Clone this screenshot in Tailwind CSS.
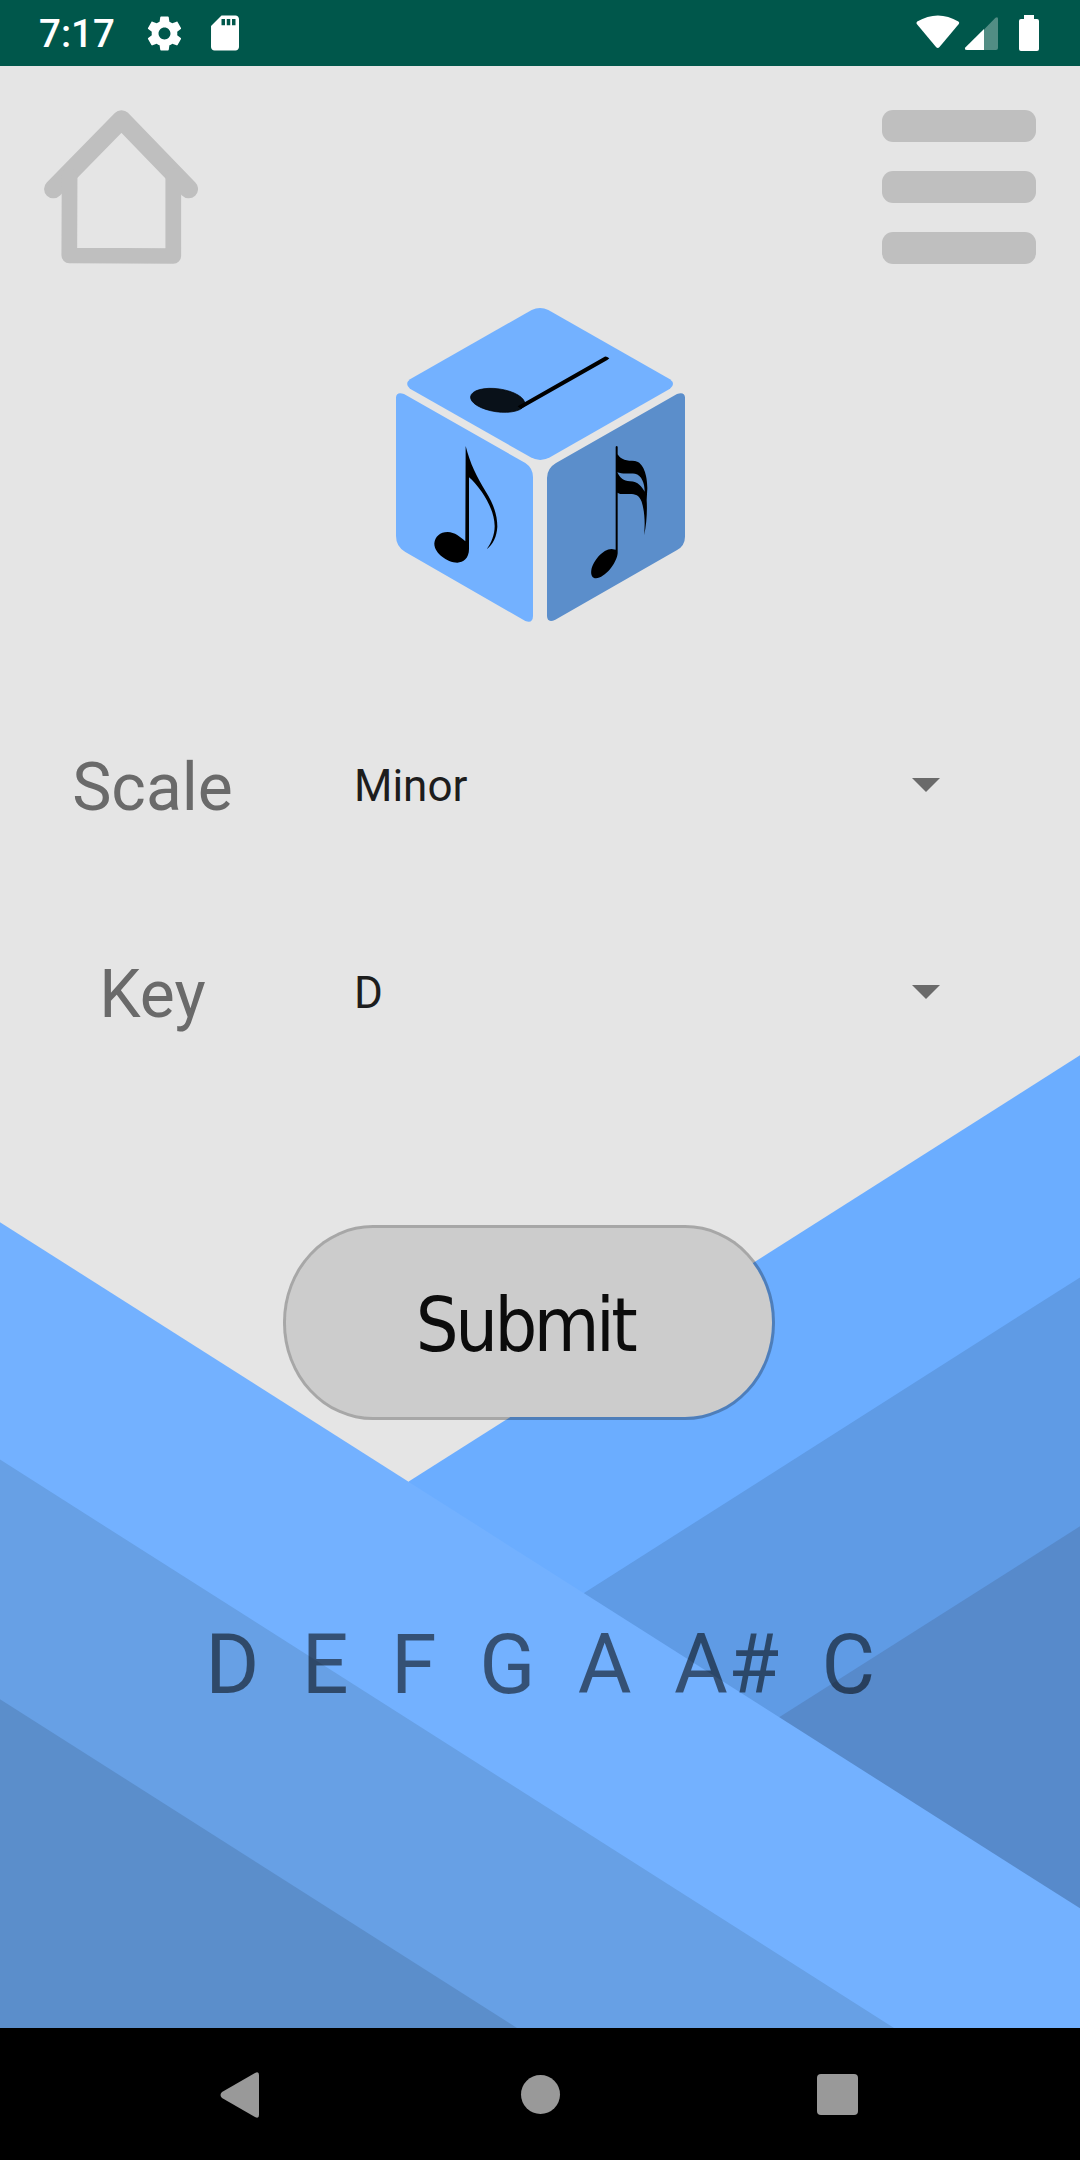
<!DOCTYPE html>
<html lang="en">
<head>
<meta charset="utf-8">
<title>Scales</title>
<script src="https://cdn.jsdelivr.net/npm/@tailwindcss/browser@4"></script>
</head>
<body class="w-[1080px] h-[2160px] flex flex-col overflow-hidden bg-[#e5e5e5] font-['Roboto',sans-serif]">

<!-- Status bar -->
<header class="h-[66px] shrink-0 bg-[#00574b] text-white flex items-center justify-between pl-[39px] pr-[41px]">
  <div class="flex items-center">
    <span class="w-[105px] pt-[3px] text-[38.5px] leading-none font-medium">7:17</span>
    <svg class="size-[41px]" viewBox="0 0 24 24" fill="currentColor"><path d="M19.43 12.98c.04-.32.07-.64.07-.98s-.03-.66-.07-.98l2.11-1.65c.19-.15.24-.42.12-.64l-2-3.46c-.12-.22-.39-.3-.61-.22l-2.49 1c-.52-.4-1.08-.73-1.69-.98l-.38-2.65C14.46 2.18 14.25 2 14 2h-4c-.25 0-.46.18-.49.42l-.38 2.65c-.61.25-1.17.59-1.69.98l-2.49-1c-.23-.09-.49 0-.61.22l-2 3.46c-.13.22-.07.49.12.64l2.11 1.65c-.04.32-.07.65-.07.98s.03.66.07.98l-2.11 1.65c-.19.15-.24.42-.12.64l2 3.46c.12.22.39.3.61.22l2.49-1c.52.4 1.08.73 1.69.98l.38 2.65c.03.24.24.42.49.42h4c.25 0 .46-.18.49-.42l.38-2.65c.61-.25 1.17-.59 1.69-.98l2.49 1c.23.09.49 0 .61-.22l2-3.46c.12-.22.07-.49-.12-.64l-2.11-1.65zM12 15.5c-1.93 0-3.5-1.57-3.5-3.5s1.57-3.5 3.5-3.5 3.5 1.57 3.5 3.5-1.57 3.5-3.5 3.5z"/></svg>
    <svg class="size-[42px] ml-[19px]" viewBox="0 0 24 24" fill="currentColor"><path d="M18 2h-8L4.02 8 4 20c0 1.100.9 2 2 2h12c1.100 0 2-.9 2-2V4c0-1.100-.9-2-2-2zm-6 5.600h-2V4h2v3.600zm3 0h-2V4h2v3.600zm3 0h-2V4h2v3.600z"/></svg>
  </div>
  <svg class="w-[123px] h-[36px]" viewBox="0 0 123 36" fill="currentColor">
    <path d="M1.200 6.500Q22-5.500 42.400 6.500Q43.700 7.500 42.800 9L23.500 32Q21.800 34 20 32L.8 9Q0 7.500 1.200 6.500Z"/>
    <path opacity=".32" d="M68 14.500L79.500 2.800Q82 1 82 4V33Q82 35 80 35H68Z"/>
    <path d="M68 14V35H51Q48 35 49.300 32.500Z"/>
    <path d="M108 0h10v4h3q2 0 2 2v28q0 2-2 2h-16q-2 0-2-2V6q0-2 2-2h3Z"/>
  </svg>
</header>

<main class="relative isolate flex-1 flex flex-col">
  <!-- Diagonal stripes -->
  <svg class="absolute inset-0 -z-10 w-full h-full" viewBox="0 66 1080 1962" preserveAspectRatio="none">
    <path fill="#6badff" d="M1080 1055.300L408.700 1481.600V1490L1080 1940Z"/>
    <path fill="#5f9be5" d="M1080 1277.400L584 1593L574 1600L1080 1940Z"/>
    <path fill="#578acb" d="M1080 1526.300L779.500 1717L769 1724L1080 1940Z"/>
    <path fill="#73b1ff" d="M0 1222.200L1080 1908.300V2028H0Z"/>
    <path fill="#67a0e5" d="M0 1459.600L894 2028H0Z"/>
    <path fill="#5b8ecb" d="M0 1699.200L517 2028H0Z"/>
  </svg>

  <div class="flex justify-between px-[44px] pt-[44px]">
    <svg class="size-[154px]" viewBox="0 0 154 154" fill="none" stroke="#bfbfbf" stroke-linejoin="round" stroke-linecap="round">
      <path stroke-width="18.700" d="M9.400 79L77.500 9.500L144.700 79"/>
      <path stroke-width="15.700" d="M25.600 66L25.300 145.500L129.300 146V66"/>
    </svg>
    <div class="w-[154px] h-[154px] flex flex-col justify-between">
      <div class="h-[32px] rounded-[11px] bg-[#bfbfbf]"></div>
      <div class="h-[32px] rounded-[11px] bg-[#bfbfbf]"></div>
      <div class="h-[32px] rounded-[11px] bg-[#bfbfbf]"></div>
    </div>
  </div>

  <!-- Music dice -->
  <svg class="w-[289px] h-[314px] mt-[44px] ml-[396px]" viewBox="48 54 867 942">
    <path fill="#73b1ff" d="M455 60Q480 48 505 60L870 268Q888 282 870 296L510 502Q481 518 452 502L90 296Q73 282 90 268Z"/>
    <g transform="translate(0 270)">
      <path fill="#73b1ff" d="M48 52Q50 34 72 42L436 249Q459 264 459 292V708Q458 732 436 723L76 516Q48 500 48 468Z"/>
      <path d="M257 198C270 250 290 290 318 336C340 370 352 405 352 440C350 470 340 492 320 508C334 488 344 465 344 438C343 400 325 365 305 335C290 315 278 300 267 292V505C268 535 250 548 232 548C200 547 162 518 163 490C165 470 180 456 203 456C225 457 240 470 256 484Z"/>
    </g>
    <g transform="translate(450 270)">
      <path fill="#5b8ecb" d="M465 52Q463 34 441 42L78 249Q51 265 51 294V708Q52 730 76 719L440 511Q465 497 465 470Z"/>
      <path d="M257 200Q260 196 263 200V223C273 240 290 243 315 243C340 247 352 285 352 325L350 360C352 390 350 435 342 466C346 430 344 395 335 365C328 345 315 342 300 342C285 342 270 344 263 338V520C260 550 225 594 198 595C185 595 182 583 184 570C188 545 218 507 245 507L257 509ZM262 277C270 295 280 302 300 304C325 305 335 320 344 335C344 310 335 285 315 281C300 279 275 283 262 277Z" fill-rule="evenodd"/>
    </g>
    <ellipse cx="353" cy="331" rx="82" ry="34.500" transform="rotate(8 353 331)" fill="#091119" stroke="#000" stroke-width="2"/>
    <path d="M413 349L674 200Q678 197 688 205L682 210L428 354Q420 358 413 349Z"/>
  </svg>

  <div class="mt-[115px] h-[100px] flex items-center">
    <span class="w-[304px] pt-[2px] pl-px text-center text-[66px] leading-none text-[#6a6a6a]">Scale</span>
    <div class="ml-[50px] w-[586px] flex items-center justify-between text-[44px] leading-none text-[#1d1d1d]">
      <span class="-mt-[2px]">Minor</span>
      <svg class="-mt-[4px] w-[28px] h-[14px]" viewBox="0 0 28 14" fill="#6a6a6a"><path d="M0 0H28L14 14Z"/></svg>
    </div>
  </div>

  <div class="mt-[107px] h-[100px] flex items-center">
    <span class="w-[304px] pt-[2px] pl-px text-center text-[66px] leading-none text-[#6a6a6a]">Key</span>
    <div class="ml-[50px] w-[586px] flex items-center justify-between text-[44px] leading-none text-[#1d1d1d]">
      <span class="-mt-[2px]">D</span>
      <svg class="-mt-[4px] w-[28px] h-[14px]" viewBox="0 0 28 14" fill="#6a6a6a"><path d="M0 0H28L14 14Z"/></svg>
    </div>
  </div>

  <button class="mt-[181px] ml-[283px] w-[492px] h-[195px] pt-[6px] pr-[8px] rounded-[90px/97px] border-[3px] border-black/27 bg-[#cccccc] bg-clip-padding text-[#0c0c0c] text-[75px] leading-none tracking-[-3.500px] font-['DejaVu_Sans_Condensed','DejaVu_Sans',sans-serif]">Submit</button>

  <p class="mt-[195px] h-[100px] leading-[100px] text-center text-[82.500px] tracking-[0.500px] whitespace-pre text-black/54 pl-[1px]">D  E  F  G  A  A#  C</p>
</main>

<!-- Navigation bar -->
<footer class="h-[132px] shrink-0 bg-black flex items-center pl-[220px]">
  <svg class="w-[39px] h-[46px] mt-px" viewBox="0 0 39 46" fill="#999"><path d="M35 1Q39-1 39 3V43Q39 47 35 45L2 26Q-1 23 2 20Z"/></svg>
  <div class="ml-[262px] mt-px size-[39px] rounded-full bg-[#999]"></div>
  <div class="ml-[257px] mt-px size-[41px] rounded-[4px] bg-[#999]"></div>
</footer>
</body>
</html>
